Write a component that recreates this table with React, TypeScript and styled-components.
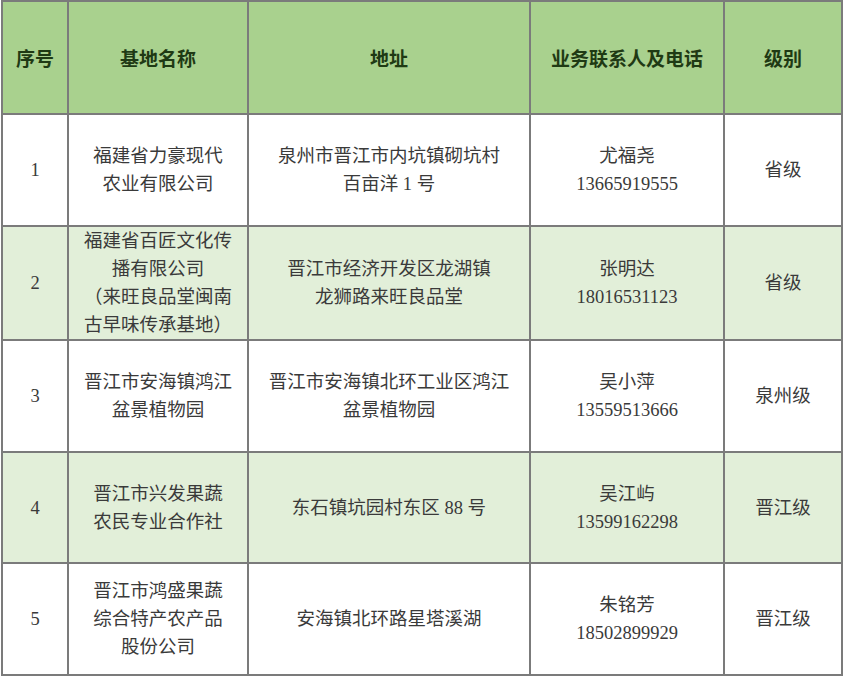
import React from "react";
import styled, { createGlobalStyle } from "styled-components";

const GlobalStyle = createGlobalStyle`
  html, body { margin: 0; padding: 0; background: #ffffff; }
  body { font-family: "Liberation Serif", "Noto Sans CJK SC", serif; }
`;

const Page = styled.div`
  padding: 0 0 0 1px;
`;

const Table = styled.table`
  width: 840px;
  border-collapse: collapse;
  table-layout: fixed;
`;

const HeadRow = styled.tr`
  height: 113px;
  background: #a9d18e;
`;

const BodyRow = styled.tr<{ $alt: boolean; $h: number }>`
  height: ${(p) => p.$h}px;
  background: ${(p) => (p.$alt ? "#e2efd9" : "#ffffff")};
`;

const HeadCell = styled.th`
  border: 2px solid #7b7b7b;
  padding: 0 6px;
  font-family: "Liberation Sans", "Noto Sans CJK SC", sans-serif;
  font-weight: 700;
  font-size: 19px;
  color: #1f3a14;
  text-align: center;
  vertical-align: middle;
`;

const Cell = styled.td`
  border: 2px solid #7b7b7b;
  padding: 0 4px;
  font-size: 18.5px;
  line-height: 28px;
  color: #3a3a3a;
  text-align: center;
  vertical-align: middle;
`;

const Line = styled.span`
  display: block;
  white-space: nowrap;
`;

type Row = {
  no: string;
  name: string[];
  addr: string[];
  person: string;
  phone: string;
  level: string;
  h: number;
};

const rows: Row[] = [
  {
    no: "1",
    name: ["福建省力豪现代", "农业有限公司"],
    addr: ["泉州市晋江市内坑镇砌坑村", "百亩洋 1 号"],
    person: "尤福尧",
    phone: "13665919555",
    level: "省级",
    h: 112,
  },
  {
    no: "2",
    name: ["福建省百匠文化传", "播有限公司", "（来旺良品堂闽南", "古早味传承基地）"],
    addr: ["晋江市经济开发区龙湖镇", "龙狮路来旺良品堂"],
    person: "张明达",
    phone: "18016531123",
    level: "省级",
    h: 114,
  },
  {
    no: "3",
    name: ["晋江市安海镇鸿江", "盆景植物园"],
    addr: ["晋江市安海镇北环工业区鸿江", "盆景植物园"],
    person: "吴小萍",
    phone: "13559513666",
    level: "泉州级",
    h: 112,
  },
  {
    no: "4",
    name: ["晋江市兴发果蔬", "农民专业合作社"],
    addr: ["东石镇坑园村东区 88 号"],
    person: "吴江屿",
    phone: "13599162298",
    level: "晋江级",
    h: 111,
  },
  {
    no: "5",
    name: ["晋江市鸿盛果蔬", "综合特产农产品", "股份公司"],
    addr: ["安海镇北环路星塔溪湖"],
    person: "朱铭芳",
    phone: "18502899929",
    level: "晋江级",
    h: 112,
  },
];

export default function App() {
  return (
    <Page>
      <GlobalStyle />
      <Table>
        <colgroup>
          <col style={{ width: 66 }} />
          <col style={{ width: 180 }} />
          <col style={{ width: 282 }} />
          <col style={{ width: 194 }} />
          <col style={{ width: 118 }} />
        </colgroup>
        <thead>
          <HeadRow>
            <HeadCell>序号</HeadCell>
            <HeadCell>基地名称</HeadCell>
            <HeadCell>地址</HeadCell>
            <HeadCell>业务联系人及电话</HeadCell>
            <HeadCell>级别</HeadCell>
          </HeadRow>
        </thead>
        <tbody>
          {rows.map((r, i) => (
            <BodyRow key={r.no} $alt={i % 2 === 1} $h={r.h}>
              <Cell>{r.no}</Cell>
              <Cell>
                {r.name.map((l) => (
                  <Line key={l}>{l}</Line>
                ))}
              </Cell>
              <Cell>
                {r.addr.map((l) => (
                  <Line key={l}>{l}</Line>
                ))}
              </Cell>
              <Cell>
                <Line>{r.person}</Line>
                <Line>{r.phone}</Line>
              </Cell>
              <Cell>{r.level}</Cell>
            </BodyRow>
          ))}
        </tbody>
      </Table>
    </Page>
  );
}
